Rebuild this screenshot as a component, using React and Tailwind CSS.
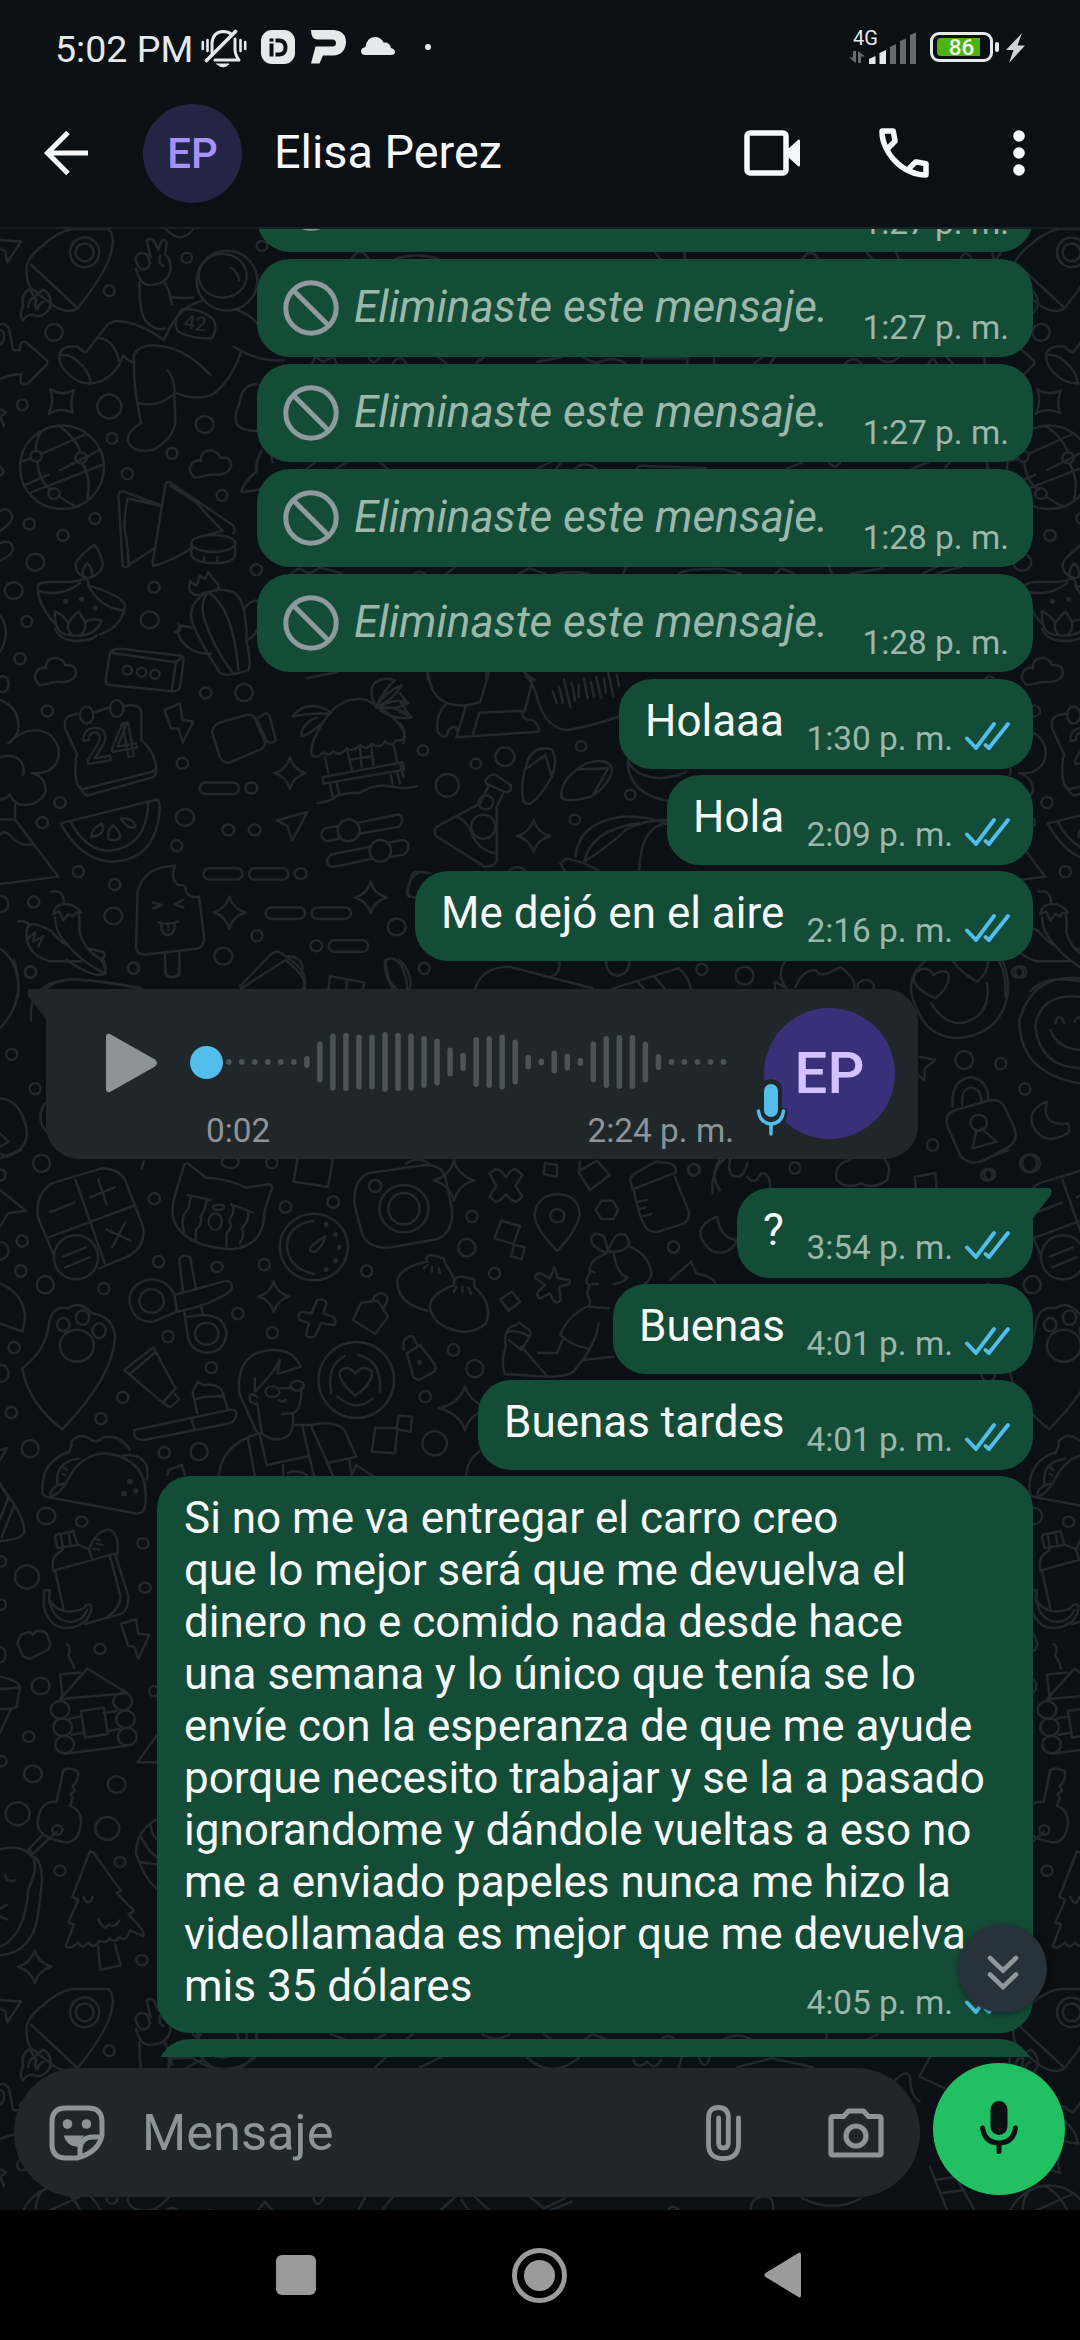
import React from "react";

const INK = "#22282c";

/* ---------- wallpaper ---------- */

function Dots({ list }) {
  return list.map(([x, y, rx, ry], i) => <ellipse key={i} cx={x} cy={y} rx={rx} ry={ry} />);
}

function Specks({ list, rx, ry }) {
  return list.map(([x, y], i) => (
    <ellipse key={i} cx={x} cy={y} rx={rx} ry={ry} fill={INK} stroke="none" />
  ));
}

function Sparks({ list }) {
  return list.map(([x, y, rx, ry], i) => (
    <path
      key={i}
      d={`M${x} ${y - ry}Q${x + rx * 0.22} ${y - ry * 0.22} ${x + rx} ${y}Q${x + rx * 0.22} ${y + ry * 0.22} ${x} ${y + ry}Q${x - rx * 0.22} ${y + ry * 0.22} ${x - rx} ${y}Q${x - rx * 0.22} ${y - ry * 0.22} ${x} ${y - ry}Z`}
    />
  ));
}

const upperPaths = [
  // star, rocket, arrow
  "M0 40L63 43L22 85L15 62L0 58",
  "M80 100Q75 80 130 50Q170 25 215 18L325 18Q345 30 335 60Q325 100 232 178Q200 190 160 172L90 135Q78 120 80 100ZM93 90L230 175",
  "M90 138Q60 150 70 172Q55 190 70 202Q80 190 95 190Q130 200 150 175Q158 150 130 140Q115 145 105 155Q95 150 90 138M85 175Q90 150 110 160Q100 175 112 180Q120 165 130 165",
  "M0 210Q20 205 28 222L40 262L60 262V252Q68 240 82 248L140 282Q145 287 138 292L85 328Q65 335 62 325V310Q30 310 0 320",
  "M150 340Q188 355 222 342Q208 365 218 388Q180 375 146 390Q165 362 150 340Z",
  "M497 18Q540 50 578 20",
  // astronaut
  "M415 92Q402 80 410 72Q425 62 440 70Q455 85 445 95Q425 105 415 92M408 98Q420 135 460 130Q510 125 512 95Q510 75 495 70L500 48Q495 35 485 42L475 60L462 42Q450 33 440 42L452 75M490 92Q475 90 480 72",
  "M418 125Q418 190 440 205Q470 225 495 218M515 170Q510 140 492 125M512 155Q560 158 580 156M608 162Q530 175 492 242Q420 205 350 203Q330 205 320 212L258 266Q240 262 235 255Q190 250 177 270Q175 295 215 315Q250 335 300 325Q350 310 370 272Q385 285 402 286",
  "M178 272Q210 265 250 295Q275 315 270 330M290 238Q340 235 358 285M692 96Q715 105 717 122",
  "M545 180Q600 175 640 200Q655 220 635 238Q580 240 535 225Q515 205 545 180Z",
  "M402 285Q395 260 440 253Q540 245 632 312M402 285Q400 340 424 408Q380 425 383 445Q400 470 460 462Q520 440 526 405L523 345Q525 320 503 302M415 368Q470 378 522 350M525 347Q590 365 640 350Q690 325 722 268M700 254Q770 285 850 282M708 180Q750 190 770 207",
  // clouds
  "M585 518Q560 505 575 490Q590 480 603 484Q600 465 630 463Q655 465 660 478Q690 475 694 492Q690 510 655 512Q625 510 612 515Z",
  "M120 935Q95 922 110 907Q125 897 138 901Q135 882 165 880Q190 882 195 895Q225 892 229 909Q225 927 190 929Q160 927 147 932Z",
  "M770 330Q725 330 718 370Q700 395 712 412Q730 425 770 424M785 465Q765 485 770 505Q735 525 722 546Q750 548 790 538M812 470L818 486",
  // globe
  "M78 532L145 512M180 503L297 463M64 485L92 480M125 470L258 430M92 548L308 492M125 425Q104 445 108 465M112 488Q120 530 155 542M178 556Q210 572 235 577M180 415Q230 440 243 468M248 490Q275 520 262 560M112 432Q150 410 180 415",
  // cards and ring
  "M480 573L367 545Q353 545 356 560L368 695Q378 702 390 692L463 660M383 560L480 574M383 560Q372 590 374 622Q385 660 386 695M497 530Q505 522 520 532L695 612Q710 620 700 630M575 660Q500 690 460 695Q455 690 460 680L497 530M510 534Q560 555 585 565Q610 585 668 625L600 637",
  "M574 650V675Q590 690 640 690Q700 690 705 675V650M612 678v8M652 678v8",
  // lamp
  "M113 740Q110 727 160 727Q230 730 248 722Q270 720 265 735Q300 740 350 757Q378 768 375 780Q360 820 300 833M113 740Q115 775 165 812M113 745Q180 760 240 730M265 735Q300 780 372 785M283 653Q228 680 226 695Q230 715 265 720Q310 710 308 690Q300 665 283 653ZM262 690Q245 700 248 715M262 690Q280 700 275 718",
  "M165 787Q160 835 215 835Q285 840 305 805Q270 800 255 808Q240 790 235 787Q215 800 205 810Q190 795 165 787ZM205 810Q200 825 215 833M255 808Q260 825 240 835M165 822Q180 845 230 846Q275 846 290 835",
  // cactus
  "M640 745Q570 760 573 800Q590 840 660 910Q680 920 745 905Q755 890 740 850Q740 760 700 748Q660 740 640 745ZM625 748Q600 765 612 800Q640 860 698 910M625 748Q700 780 715 905M572 725Q560 745 580 752Q600 758 615 748M572 728L590 735L600 715L615 722L625 708L640 722Q665 735 650 745M575 820Q540 810 533 825Q535 845 570 862Q600 873 633 872M525 828L540 825M535 812L542 820M732 782Q750 765 770 765M745 843Q765 835 770 825",
  // box
  "M330 870Q340 862 360 862L545 876Q553 880 550 890L540 940Q530 950 510 947L325 935Q315 930 318 920ZM333 870L528 889L548 878M528 889L515 946",
  // calendar
  "M240 992Q195 995 195 1010L195 1022L232 1075Q225 1080 226 1115Q228 1138 245 1145L450 1110Q465 1108 468 1100Q465 1070 424 1045V990Q420 970 370 978M280 990L328 980M240 1140Q250 1155 262 1157L460 1120Q470 1115 467 1100",
  "M493 985L540 972L547 1005L580 1008L548 1050L535 1022L513 1022Z",
  "M636 1030Q640 1015 660 1010L740 995Q765 993 770 1010L795 1050Q795 1060 780 1065L690 1090Q670 1093 660 1080ZM770 1003L795 992Q805 990 810 1000L827 1045Q820 1055 800 1048Z",
  // beach hut
  "M935 1075Q925 1050 990 990Q1040 955 1100 965Q1200 1000 1215 1035Q1210 1050 1190 1045Q1175 1062 1155 1048Q1140 1065 1115 1053Q1100 1068 1080 1055Q1060 1070 1040 1062Q1020 1080 1000 1068Q985 1080 970 1070Q950 1085 935 1075Z",
  "M995 990Q920 960 878 998Q940 990 990 993M950 1000Q900 1015 905 1038Q925 1035 970 1010M1128 980Q1100 940 1130 928Q1150 918 1185 925Q1150 945 1128 980Q1150 950 1205 935Q1180 965 1128 980Q1190 960 1225 970Q1200 985 1128 980Q1190 975 1235 1000Q1180 1005 1140 985",
  "M968 1120L1208 1090L1212 1105L970 1133ZM975 1080L985 1112M1182 1058L1192 1092M1042 1065L1055 1105M1115 1060L1120 1095M1080 1062L1085 1100M1050 1085L1115 1078M990 1135L998 1158M1010 1133L1018 1152M1172 1115L1178 1135M1192 1112L1200 1132M952 1172Q990 1170 1010 1158Q1050 1150 1080 1152Q1130 1130 1180 1140Q1220 1145 1250 1138",
  "M830 1207L922 1190L877 1247L862 1218Z",
  // sliders
  "M1014 1218L978 1222Q962 1228 965 1238Q970 1250 990 1248L1020 1243M1078 1234L1195 1220Q1212 1210 1205 1200Q1200 1193 1185 1196L1072 1212",
  "M1112 1260L995 1275Q978 1285 982 1292Q988 1302 1005 1300L1115 1284M1172 1280L1210 1276Q1228 1268 1225 1256Q1220 1246 1205 1247L1162 1252",
  // watermelon
  "M182 1213L472 1165Q482 1170 478 1195Q460 1290 330 1290Q240 1285 182 1213ZM212 1210Q260 1270 330 1268Q440 1260 445 1172M275 1240Q270 1225 305 1214Q320 1235 275 1240ZM325 1243Q322 1225 340 1217Q375 1240 350 1246Q330 1248 325 1243ZM362 1203Q395 1200 407 1218Q390 1230 362 1203Z",
  // popsicle
  "M408 1460L413 1350Q430 1300 525 1298Q510 1325 535 1337Q560 1335 558 1350Q570 1365 597 1360L613 1445Q610 1462 590 1465L430 1477Q408 1475 408 1460ZM495 1473V1510Q500 1522 518 1522Q538 1520 538 1508V1470M458 1372L486 1377L460 1384M550 1366L525 1376L550 1382M475 1412Q505 1418 535 1410M483 1415Q485 1438 505 1438Q525 1436 524 1414M505 1418v10",
  // tree on the left edge
  "M0 965Q60 980 55 1025Q45 1045 25 1052Q90 1010 150 1035Q190 1060 170 1090Q150 1115 95 1112Q140 1120 137 1150Q115 1180 60 1175Q40 1170 30 1155Q15 1165 0 1165M0 1080Q40 1070 65 1090Q75 1105 68 1115M45 1175V1205Q20 1205 0 1205M45 1205L175 1320L0 1335M0 1235Q15 1225 35 1240Q60 1260 100 1255",
  // peppers
  "M155 1350Q190 1345 192 1372M160 1395Q165 1375 195 1375Q225 1375 243 1392Q225 1390 220 1400L205 1395L190 1408L178 1390ZM165 1402Q165 1430 200 1455Q240 1490 315 1515Q320 1500 300 1485Q250 1465 238 1430Q240 1400 235 1392M55 1410Q80 1408 88 1418M80 1440Q75 1418 100 1415Q130 1420 155 1430Q180 1450 200 1458M80 1445Q90 1480 150 1490L245 1490M270 1465L312 1472Q318 1480 305 1485M82 1445L105 1432L100 1450L130 1440L115 1460",
  "M0 585Q25 575 38 595Q35 610 0 625M0 650Q35 640 40 662Q35 675 0 685M0 795Q18 810 18 830Q15 855 0 868M0 380L18 387L0 396L12 414M0 495L12 507L0 515",
  "M130 1550Q170 1525 220 1527Q330 1530 420 1546M720 1540L815 1475Q835 1465 855 1480Q910 1500 915 1530V1548M862 1480Q905 1480 908 1505M985 1548L990 1520L1093 1533L1088 1548M1040 1530v15M1180 1548Q1150 1510 1155 1490Q1180 1475 1205 1500Q1225 1530 1220 1548M0 1465Q60 1490 55 1560M1250 1310Q1235 1310 1232 1325L1222 1350Q1225 1362 1245 1362",
];

const upperDots = [
  [254, 65, 44, 30], [254, 65, 27, 18], [0, 235, 12, 14], [681, 122, 91, 60], [668, 112, 72, 44],
  [186, 497, 126, 84], [108, 475, 17, 11], [243, 478, 17, 11], [162, 550, 17, 11], [640, 650, 66, 17],
  [382, 905, 14, 9], [425, 909, 14, 9], [465, 913, 14, 9], [260, 995, 20, 17], [350, 982, 20, 17],
  [1046, 1227, 33, 22], [1141, 1268, 32, 22],
  [328, 142, 16, 11], [162, 226, 26, 17], [67, 372, 16, 11], [328, 375, 36, 24], [336, 439, 16, 11],
  [614, 411, 27, 17], [516, 469, 16, 11], [560, 76, 16, 10], [382, 510, 17, 11], [666, 554, 16, 11],
  [88, 611, 17, 11], [285, 600, 17, 11], [189, 634, 17, 11], [106, 688, 27, 17], [462, 738, 17, 11],
  [41, 745, 27, 17], [80, 807, 16, 11], [449, 804, 27, 17], [60, 882, 17, 11], [617, 951, 17, 11],
  [732, 950, 27, 17], [142, 987, 17, 11], [547, 1092, 17, 11], [754, 1142, 18, 11], [555, 1201, 27, 17],
  [180, 1171, 17, 11], [127, 1211, 17, 11], [685, 1226, 18, 11], [764, 1226, 18, 11], [530, 1258, 17, 11],
  [235, 1310, 17, 11], [344, 1336, 17, 11], [902, 1314, 18, 11], [101, 1371, 17, 11], [340, 1399, 27, 17],
  [771, 1439, 17, 11], [670, 1480, 27, 17], [400, 1504, 17, 11], [92, 1512, 17, 11], [949, 1459, 18, 11],
  [1190, 1421, 27, 17], [769, 703, 17, 11], [786, 52, 16, 10], [0, 1375, 25, 17], [8, 933, 18, 16],
];

const pills = [[599, 1131], [610, 1303], [747, 1303], [797, 1382], [935, 1382], [986, 1448]];

const middlePaths = [
  // calculator
  "M80 200Q75 130 110 100L215 55Q250 55 265 90L303 230Q310 290 270 320L210 355M80 200L115 320M160 90L222 340M103 262L282 168M107 186L158 158M133 320L182 292M138 352L190 322M190 142L243 112M208 88L226 163M225 238L276 272M265 218L238 292",
  // cat
  "M370 140L390 45Q395 35 405 48L437 83Q480 85 522 113L570 102Q578 105 576 115L560 185Q560 290 490 298Q390 290 368 210Q362 170 370 140ZM397 135L447 150M490 163L536 188M405 140Q400 160 400 175Q380 200 390 245M438 150Q435 180 425 200Q430 220 415 240V275M492 165Q500 185 485 210Q495 230 480 250V288M525 183Q530 210 512 235Q520 250 508 280",
  "M630 30L622 95L695 110L705 30",
  // camera
  "M752 170Q745 95 780 70L900 45Q940 45 945 90L958 180Q960 250 925 268L830 292Q775 300 765 240ZM860 42Q885 15 910 42",
  "M1037 70L1050 58Q1060 55 1072 82Q1085 50 1095 60L1107 75L1092 107L1107 140L1095 155Q1085 155 1072 132Q1060 155 1050 155L1037 140L1052 107Z",
  "M1155 40L1180 45V80L1152 72ZM1225 65L1265 32L1292 75L1250 120ZM1228 35V60",
  "M1181 303Q1130 230 1133 190Q1140 135 1181 132Q1225 135 1228 190Q1228 230 1181 303ZM1275 152H1298L1310 178L1300 207H1275L1262 180ZM1062 212L1102 228L1088 282L1048 265ZM1090 285L1112 292L1105 328L1082 318Z",
  "M1335 85L1340 118L1432 68Q1435 50 1420 40L1390 35L1345 70ZM1343 118Q1350 180 1365 225Q1375 250 1395 245L1450 220Q1465 200 1458 180L1430 80M1352 155L1370 150M1354 178L1368 172M1360 200L1380 192",
  "M665 212Q608 225 608 290Q612 355 665 372M690 258L660 288Q652 308 668 305Q684 290 690 258",
  // scissors
  "M380 330Q385 310 403 322L415 415M380 330L388 428M370 435Q350 380 310 390Q270 410 275 460Q285 520 325 515L375 485Q450 465 490 420Q495 395 480 392L370 435L375 485M425 465L430 495Q475 495 480 550Q475 610 435 608Q400 600 397 550L390 480M398 500L430 495",
  "M672 450Q690 445 692 460L685 490L705 500Q715 510 708 525L680 520L668 558Q655 568 648 555L655 520L635 510Q628 495 638 485L660 490Z",
  "M748 510L765 458L800 452L822 500L795 552ZM790 450Q795 430 808 430Q825 435 820 455L812 475",
  // dumplings
  "M905 482Q840 460 842 390Q850 350 905 335Q900 315 915 315L940 325L945 345Q955 365 962 388M962 395Q965 378 980 380L1005 388V410Q1045 460 1030 520Q990 570 930 520Q880 450 962 405ZM898 355l8 -10M915 365v-15M932 370l-2 -15M962 425l5 -15M980 425v-15M998 432l-5 -18",
  "M1175 352L1182 385L1205 390Q1212 400 1200 405L1185 410L1188 450Q1180 465 1172 450L1165 430L1145 445Q1135 440 1140 425L1155 405L1135 385Q1132 372 1145 370L1165 385ZM1060 448L1085 425L1102 455L1078 482Z",
  // woman
  "M1285 308Q1250 290 1253 265Q1260 240 1280 260L1288 300L1305 258Q1325 240 1333 275Q1330 310 1288 305M1335 290Q1380 320 1380 375Q1375 395 1365 402M1285 310Q1245 330 1250 370Q1235 400 1250 405Q1240 430 1250 450V470L1290 475M1300 310Q1310 380 1330 382Q1320 400 1300 402M1252 362l8 5M1255 402h12M1250 465Q1200 500 1187 555Q1215 590 1245 595M1268 520Q1265 580 1215 665Q1200 680 1160 680L1070 672Q1060 640 1072 590Q1068 560 1075 545Q1075 530 1095 525Q1100 510 1110 530Q1130 540 1122 560L1105 600M1140 608L1180 610L1192 570M1235 630L1300 620M1076 545Q1100 540 1122 560M1105 590L1160 680M1078 570L1105 600",
  "M1420 390L1465 335L1475 370Q1510 380 1515 398M1510 130Q1505 60 1540 20M1520 200Q1480 220 1485 260Q1500 310 1530 308Q1555 300 1562 270Q1525 265 1520 200",
  // paw
  "M132 838Q60 760 47 655Q100 600 105 510Q115 465 145 475Q170 450 195 490Q240 500 244 560Q240 680 132 838Z",
  "M263 660L325 592L372 715L345 758ZM275 672L328 608M345 758L360 772L380 748L370 732",
  "M285 840L485 780Q505 775 500 800Q495 820 480 822L305 870Q280 870 285 840ZM418 790L408 725L420 695L430 705Q460 700 470 720L482 775M415 748L435 740L475 738M405 805L412 835",
  // man
  "M545 850L507 730Q500 620 560 602Q620 590 637 650L605 665L588 672Q590 650 593 630Q580 670 540 725L540 685M545 740Q525 720 530 755L545 765M545 760L555 850Q580 880 605 862Q625 850 620 790Q640 780 638 715M590 750Q600 760 605 750M595 715L615 715M597 793Q610 790 620 790M550 850Q470 880 463 980M525 865L540 975M550 852L565 945L655 918M625 825L660 825M640 825L655 918L665 975M660 825Q710 810 730 840L755 920L692 940M660 830L705 975M740 930L745 975L755 945L790 978M600 975V945M610 970Q625 955 650 975",
  "M730 618Q690 650 702 730M758 615Q810 630 805 725M715 740Q755 790 790 745M753 737Q715 690 720 665Q735 640 753 670Q770 640 788 665Q790 700 753 737Z",
  "M862 610L890 585L920 640Q925 655 920 665L888 690Q875 685 875 675ZM855 600V575Q865 555 875 560L885 588",
  "M795 833L842 835L837 910L788 905ZM845 797L873 800L870 845L840 838Z",
  "M0 400Q50 430 53 500L48 545L0 520M0 120L55 182L17 190L0 230M0 900L15 895L0 930M0 1000L20 1050M0 25L45 0M355 975L357 960L385 945L392 975M988 975Q990 930 1015 905M300 55l5 -20",
];

const middleDots = [
  [161, 322, 47, 66], [456, 215, 14, 25], [463, 172, 12, 8], [856, 176, 52, 71], [856, 176, 33, 47],
  [795, 108, 13, 18], [1181, 197, 15, 20], [665, 291, 72, 100], [321, 453, 26, 35], [438, 551, 25, 33],
  [163, 587, 36, 48], [134, 524, 13, 20], [175, 503, 14, 22], [210, 542, 14, 22], [577, 725, 15, 16],
  [630, 707, 14, 15], [755, 690, 80, 114],
  [88, 40, 18, 26], [0, 75, 12, 17], [327, 146, 12, 17], [47, 273, 12, 17], [44, 363, 12, 17],
  [96, 404, 18, 26], [220, 416, 12, 17], [336, 335, 12, 17], [460, 351, 12, 15], [560, 344, 12, 17],
  [605, 171, 12, 17], [706, 156, 12, 17], [777, 363, 12, 17], [1000, 199, 12, 17], [989, 293, 18, 26],
  [1471, 58, 12, 17], [1427, 291, 12, 17], [1048, 370, 12, 17], [504, 491, 12, 17], [356, 560, 12, 17],
  [577, 548, 12, 17], [448, 653, 12, 17], [30, 593, 12, 17], [260, 742, 12, 17], [24, 788, 12, 17],
  [214, 806, 12, 17], [64, 896, 18, 26], [348, 908, 12, 17], [422, 905, 18, 26], [961, 600, 12, 17],
  [1006, 656, 18, 26], [901, 740, 12, 17], [921, 880, 26, 36], [3, 670, 15, 25], [0, 302, 18, 26],
  [488, 36, 18, 18], [576, 38, 12, 17],
];

const lowerPaths = [
  // taco
  "M150 120Q125 120 127 100Q125 30 205 5M150 120L405 160Q435 165 437 130Q445 20 315 8Q240 10 200 80Q180 110 150 120Q150 90 195 85M365 15Q420 5 440 40Q445 65 440 75M172 85Q165 30 235 22M192 45l8 6M188 60l8 4",
  "M205 8Q215 -5 215 -22Q240 -45 270 -28Q290 -15 310 -32Q360 -40 390 0",
  "M0 90Q70 160 73 205Q70 225 0 230M25 120L0 175M40 145L5 220",
  // backpack
  "M165 222Q165 212 185 212L220 205L233 240L172 248ZM182 212L188 245M205 208L212 240M160 305Q150 270 185 255L190 247M235 240L265 250Q275 265 275 278M160 305L345 262L385 370Q385 410 360 415L255 440M330 270L362 370Q360 400 325 420M165 305L190 400M268 250Q290 200 330 202Q360 215 352 265M285 225L300 228M280 250L298 252M290 237L308 240",
  "M132 355H150L147 375Q165 410 215 408Q250 405 255 395Q265 385 275 395Q275 410 260 430Q210 465 160 440Q125 410 132 375ZM147 378Q160 435 215 435Q250 430 262 405",
  "M55 480L65 465L90 460L98 467L110 458Q130 455 140 465L152 492L145 505L90 528L70 522L52 490Z",
  "M363 440L408 428L415 465L448 468L415 528L402 497L385 495Z",
  "M200 490Q215 500 205 520Q220 540 222 552",
  // cabin
  "M180 630L262 553L382 615ZM180 568L240 563M180 568L187 620M207 680L245 673M215 720L250 715M310 665L350 660M322 712L358 705M195 768L380 748M243 660L312 652L323 718L255 727Z",
  "M470 722L412 790H470M0 573Q60 585 60 600L50 650Q40 655 0 655M0 603Q30 605 55 600M32 657L0 715",
  // key
  "M170 890L190 810Q205 800 233 812Q238 825 228 840L218 850L225 862L212 870L218 880L210 900Q245 910 243 945Q235 995 195 992Q110 980 113 940Q120 885 170 890M170 965L98 1022L80 1015L125 975M85 1010L98 1022",
  // sleeping mask
  "M0 1010Q60 995 100 1030Q115 1060 85 1110Q80 1180 50 1220Q25 1250 0 1255M105 1030Q130 1050 125 1100L115 1170Q100 1270 0 1278M15 1075Q20 1095 45 1088M0 1160L22 1150M0 1180L22 1187",
  "M470 935Q410 960 408 1020Q430 1080 470 1110M418 1042L470 1048M425 980Q440 1010 470 1030M452 950Q455 970 470 985",
  // fir tree
  "M270 1015L217 1130L235 1138L205 1195L222 1200L197 1255Q210 1265 235 1245Q245 1265 265 1245Q280 1265 300 1240Q315 1250 330 1235Q345 1250 360 1230Q375 1250 390 1215L430 1230Q440 1220 385 1175L402 1165L350 1120L363 1115L280 1018ZM250 1130Q265 1160 278 1130M295 1187Q315 1220 325 1200Q345 1210 358 1190M295 1255L300 1315L362 1303L345 1250",
];

const lowerDots = [
  [139, 167, 27, 21], [245, 181, 17, 13], [429, 236, 17, 13], [81, 321, 36, 29], [435, 348, 17, 13],
  [300, 503, 17, 13], [122, 597, 27, 21], [86, 725, 17, 13], [99, 819, 27, 21], [350, 846, 27, 21],
  [53, 920, 36, 29], [322, 957, 36, 29], [360, 1042, 17, 13], [180, 1064, 17, 13], [426, 1290, 17, 13],
  [4, 282, 14, 13], [4, 391, 14, 13], [4, 787, 16, 13], [0, 518, 17, 20], [462, 610, 14, 13],
  [180, 657, 28, 22], [188, 701, 28, 22], [194, 745, 28, 22], [368, 636, 28, 22], [377, 681, 28, 22],
  [382, 725, 28, 22], [172, 961, 15, 12],
];

const beachPaths = [
  "M65 38Q70 110 110 130Q150 145 185 125L205 38M305 65L288 38M305 65L288 152L183 158M152 138L130 232L320 215Q320 190 305 180Q280 180 282 160L288 152M183 158L168 225M108 130Q80 165 87 215Q100 240 108 225Q112 200 128 200L133 215M290 48Q310 70 320 130Q340 205 385 210Q440 200 508 168",
  "M352 95L362 130M366 80L376 128M378 58L393 142M396 70L404 122M412 75v35M424 55L433 115M440 65L447 110M452 50L464 115M470 55L475 98M480 38L492 108M500 45L505 78",
  "M0 100L18 130L0 125L25 170L0 155M0 190Q15 215 8 250M0 310L8 350",
  "M285 425Q275 370 295 300Q310 255 350 268Q365 300 350 350Q325 410 300 432Q288 432 285 425ZM293 325L335 285L350 350M372 400Q375 350 430 310Q480 290 490 330Q480 380 440 410Q385 430 372 412ZM415 328L480 325L448 398",
  "M205 350Q215 338 225 348L255 375Q260 395 245 397L200 372Q193 362 205 350ZM205 375L185 430L85 500Q75 515 85 530L195 620Q220 620 223 600V440L240 395M130 468Q160 490 165 520Q180 570 220 580",
  "M370 610L385 595L425 610L455 630M370 610L380 632M405 590Q410 490 510 470Q560 465 615 490M425 605Q440 510 550 490M425 605Q490 550 520 510Q560 480 615 480M552 630Q555 500 615 490M525 300Q540 350 600 355Q640 350 660 335M525 310Q530 400 615 422",
  "M20 710Q10 690 30 650L45 635L70 640",
];

const beachDots = [
  [53, 271, 12, 15], [242, 290, 22, 28], [175, 311, 12, 15], [109, 376, 27, 34], [418, 259, 12, 15],
  [531, 404, 12, 15], [403, 479, 12, 15], [198, 427, 17, 21], [192, 500, 28, 36], [270, 634, 18, 12],
];

const voiceRowPaths = [
  "M97 0Q140 60 152 40Q155 20 150 0M240 0V40Q245 60 260 45V0M0 205Q40 120 20 0M45 180Q40 60 110 58Q170 70 205 85M350 85L415 0M415 0Q450 60 440 85M560 0Q560 60 575 85M580 0Q600 40 595 85M690 85Q700 20 740 20L860 85M812 0Q815 40 800 50M880 0Q880 45 897 47Q915 40 914 0M890 85L985 25Q1000 50 1003 85M925 65L935 85M950 50L965 85M1125 85V65L1142 85Q1125 40 1142 0M1155 80Q1165 30 1185 30Q1190 60 1220 20Q1245 60 1240 85",
  "M1345 0Q1310 60 1330 140Q1345 230 1390 235Q1460 220 1464 80Q1462 30 1455 0M1358 115Q1320 80 1328 40Q1345 10 1355 45Q1375 20 1378 50Q1375 90 1358 115ZM1418 65Q1390 30 1383 0M1418 65Q1435 40 1435 0M1352 130Q1370 190 1395 190Q1440 170 1433 70",
  "M1568 55Q1500 40 1480 180Q1480 340 1568 370M1568 110Q1510 100 1503 200Q1510 320 1568 325M1525 210Q1535 265 1568 270M1532 190Q1538 150 1545 190M1560 185Q1565 165 1568 175M1335 290L1358 300L1343 325L1342 362L1333 345",
  "M1383 440Q1380 360 1410 352Q1435 360 1435 420M1397 435Q1395 385 1410 383Q1425 385 1425 430M1388 450Q1370 460 1376 500L1395 590Q1410 620 1430 600L1465 560Q1480 540 1472 500L1458 440Q1450 410 1430 425ZM1418 510L1412 565L1447 545L1425 505",
  "M1520 425Q1490 450 1500 500Q1515 560 1550 520Q1555 505 1550 490Q1520 500 1518 450Z",
  "M0 415Q25 420 35 480Q50 560 10 590L0 580M0 520L12 545L0 560M65 430Q50 480 70 520",
  "M1045 690Q1030 640 1045 600M1060 600Q1055 650 1070 650Q1080 650 1085 610M1085 650Q1095 680 1105 640Q1120 640 1118 690M1235 600Q1210 610 1215 660Q1230 690 1250 670Q1270 690 1288 660Q1295 620 1285 600M1330 690L1328 650L1358 640L1360 690",
];

const voiceRowDots = [
  [194, 24, 8, 17], [44, 36, 8, 17], [616, 25, 8, 17], [1019, 28, 8, 17], [1081, 47, 13, 27],
  [1257, 80, 12, 20], [1482, 36, 8, 17], [1400, 300, 13, 27], [1453, 311, 8, 17], [1421, 488, 12, 24],
  [1488, 387, 8, 17], [1497, 610, 13, 27], [1354, 555, 8, 17], [1437, 643, 8, 17], [17, 283, 8, 17],
  [51, 386, 8, 17], [1007, 630, 8, 17], [1154, 624, 8, 17],
];

const gapPaths = [
  "M208 117Q225 75 240 117M290 117Q330 95 370 117M775 98L785 117M830 98V117M1050 117Q1065 80 1080 117M1170 98l10 19M1225 98l5 19M1345 117q10 -35 20 0",
  "M135 430L140 410L155 425L175 410L180 430M240 412Q250 440 260 412M285 430Q300 400 310 430M370 412L385 430M440 430L455 412M555 425L600 412M640 412L665 430Q695 405 720 430M750 430V415H835V430M885 412v18M960 430L975 412M990 430L998 412M1130 430Q1145 405 1160 430M1190 412Q1210 440 1230 412M1285 430q8 -25 15 0M1320 412l10 18M1390 412v18",
  "M140 726L125 746M180 746L200 726M260 726l15 20M555 746L580 726M590 746L600 726M625 746q20 -25 40 0M740 746Q745 735 760 738L870 745M1020 746L1050 728M1100 728q10 22 20 0M1255 746L1285 726M1325 726l-10 20M1395 728v18",
  "M95 1061L110 1045L130 1061L150 1042L190 1061M325 1061q10 -10 20 0M385 1061L400 1043M520 1061L540 1045L570 1061M590 1061q30 -8 60 0M715 1061L720 1043M820 1061Q830 1045 900 1047L935 1061M1000 1061L1010 1045L1035 1061M1100 1043l5 18M1140 1061L1200 1045M1275 1061L1300 1041M1300 1061L1345 1041",
  "M125 1375L180 1357M350 1357v20M460 1357v20M530 1357L550 1380",
];

const footerPaths = [
  "M280 535Q325 600 370 535M245 562V535H265M545 562L560 532M610 562L640 532M765 532Q800 600 840 535M920 540q5 30 20 5q10 30 20 -5M985 562L990 532M1015 535q8 40 15 0M1070 562L1120 535L1180 562M1350 532L1335 590L1372 625M1300 600Q1320 560 1322 600Q1320 640 1335 665",
  "M375 990L385 965L395 990M455 952q5 40 15 0M520 990L530 952M555 990L570 952M640 990L660 952M670 960L680 990M690 952L710 990M770 952L790 985L820 955M800 990L830 965M970 990q5 -20 15 0M1090 990q0 -40 20 -40q15 0 12 40M1165 955Q1210 1000 1250 955M1350 860L1375 990M1385 880L1415 990M1358 900L1388 890M1366 940L1400 930",
  "M280 462Q285 480 292 462M345 462V478M372 462V478M480 462L500 478M545 478L560 462M590 478L600 462M700 462Q720 490 740 462M790 462L800 478M850 478L860 462L880 478M960 478q10 -20 20 0M1050 478Q1070 455 1090 478M1200 462v16M1260 478L1275 462",
];

function Wallpaper() {
  return (
    <svg
      className="absolute inset-0 h-full w-full"
      viewBox="0 0 1080 2340"
      fill="none"
      stroke={INK}
      strokeWidth="2.5"
      strokeLinecap="round"
      strokeLinejoin="round"
      aria-hidden="true"
    >
      <defs>
        <g id="wp-upper">
          <g transform="translate(0 220) scale(.33333 .49745)" className="[&_*]:[vector-effect:non-scaling-stroke]">
            {upperPaths.map((d, i) => <path key={i} d={d} />)}
            <Dots list={upperDots} />
            <Sparks list={[[870, 1112, 47, 32], [688, 1392, 48, 32], [1112, 1362, 48, 32]]} />
            {pills.map(([x, y], i) => <rect key={i} x={x} y={y} width="118" height="23" rx="17" ry="11.5" />)}
            <Specks list={[[197, 767], [245, 763], [285, 780]]} rx={8} ry={5} />
          </g>
          <text x="195" y="330" textAnchor="middle" fontSize="20" fontFamily="Roboto" fontWeight="500" stroke="none" fill={INK} transform="rotate(8 195 324)">42</text>
          <text x="110" y="760" textAnchor="middle" fontSize="48" fontFamily="Roboto" fontWeight="500" strokeWidth="2.200" transform="rotate(-10 110 745)">24</text>
        </g>
        <g id="wp-middle">
          <g transform="translate(0 1150) scale(.47193 .33333)" className="[&_*]:[vector-effect:non-scaling-stroke]">
            {middlePaths.map((d, i) => <path key={i} d={d} />)}
            <Dots list={middleDots} />
            <Sparks list={[[962, 91, 43, 60], [580, 440, 33, 46], [985, 775, 55, 65]]} />
            <Specks list={[[691, 223], [711, 253], [719, 292], [711, 332], [691, 358], [889, 637]]} rx={5} ry={8} />
          </g>
        </g>
        <g id="wp-lower">
          <g transform="translate(0 1450) scale(.33333 .39541)" className="[&_*]:[vector-effect:non-scaling-stroke]">
            {lowerPaths.map((d, i) => <path key={i} d={d} />)}
            <Dots list={lowerDots} />
            <Sparks list={[[104, 1307, 50, 42]]} />
            <Specks list={[[390, 80], [407, 104], [372, 110]]} rx={9} ry={7} />
          </g>
        </g>
      </defs>
      <use href="#wp-upper" />
      <use href="#wp-upper" x="987" />
      <use href="#wp-upper" y="1760" />
      <use href="#wp-upper" x="987" y="1760" />
      <use href="#wp-middle" />
      <use href="#wp-middle" x="987" />
      <use href="#wp-lower" />
      <use href="#wp-lower" x="987" />
      <g transform="translate(400 660) scale(.43365 .33333)" className="[&_*]:[vector-effect:non-scaling-stroke]">
        {beachPaths.map((d, i) => <path key={i} d={d} />)}
        <Dots list={beachDots} />
        <Sparks list={[[308, 528, 38, 48]]} />
      </g>
      <g transform="translate(0 960) scale(.68875 .33333)" className="[&_*]:[vector-effect:non-scaling-stroke]">
        {voiceRowPaths.map((d, i) => <path key={i} d={d} />)}
        <Dots list={voiceRowDots} />
      </g>
      <g transform="translate(240 220) scale(.53571 .33333)" className="[&_*]:[vector-effect:non-scaling-stroke]">
        {gapPaths.map((d, i) => <path key={i} d={d} />)}
      </g>
      <g transform="translate(0 1880) scale(.68875 .33333)" className="[&_*]:[vector-effect:non-scaling-stroke]">
        {footerPaths.map((d, i) => <path key={i} d={d} />)}
      </g>
    </svg>
  );
}

/* ---------- status bar ---------- */

function StatusBar() {
  return (
    <div className="flex h-[95px] items-start pl-[55px] pt-[26px]">
      <div className="w-[146px] whitespace-nowrap text-[37.6px] leading-[46px] text-[#e6e9e9]">5:02 PM</div>
      <svg className="mt-[3px] h-[40px] w-[46px] shrink-0" viewBox="0 0 46 40" fill="none" stroke="#e6e9e9" strokeWidth="3" strokeLinecap="round" strokeLinejoin="round">
        <path d="M1.8 13v7M6.5 11v11M39.500 11v11M44.200 13v7" strokeWidth="2.600" />
        <path d="M11 24V14Q12 3 22 2.500Q27 2.500 30 5" />
        <path d="M34 10V20Q34 26 38 31H14" />
        <path d="M34.500 2.500L5.500 31.500" strokeWidth="3.600" />
        <path d="M16 35H28Q22 41 16 35Z" fill="#e6e9e9" strokeWidth="1" />
      </svg>
      <svg className="ml-[14px] mt-[4px] h-[34px] w-[34px] shrink-0" viewBox="0 0 34 34">
        <rect width="34" height="34" rx="11" fill="#e6e9e9" />
        <path d="M8.500 13.500h4v13h-4zM8.500 8.500h4v3h-4zM14.500 8.500h4q8 .5 8 9t-8 9h-4v-4h4q4-.5 4-5t-4-5h-4z" fill="#0b1014" />
      </svg>
      <svg className="ml-[16px] mt-[4px] h-[34px] w-[35px] shrink-0" viewBox="0 0 35 34" fill="#e6e9e9">
        <path d="M0 0H23Q35 1 35 12.500Q34 25 22 25.500H12L8.500 33.500H0L4.500 16.500H22Q25 16 25 13T22 9.500H6Q0 9 0 0Z" />
      </svg>
      <svg className="ml-[15px] mt-[11px] h-[18px] w-[34px] shrink-0" viewBox="0 0 34 18" fill="#e6e9e9">
        <path d="M4.500 18Q0 18 0 14Q0 11 4.500 10Q6 0 14 0Q20 0 22.500 5.500Q29 5 30 11Q34 12 34 15Q34 18 30 18Z" />
      </svg>
      <div className="ml-[30px] mt-[18px] h-[6px] w-[6px] shrink-0 rounded-full bg-[#e6e9e9]" />
      <div className="ml-[418px] mt-[2px] flex h-[38px] shrink-0">
        <div className="w-[19px]">
          <div className="pl-[4px] text-[20px] leading-[20px] text-[#e6e9e9]">4G</div>
          <svg className="mt-[3px] h-[12px] w-[16px]" viewBox="0 0 16 12" fill="#686b6d">
            <path d="M4 0h3v12L0 6.500h4zM9 0l7 5.500h-4V12H9z" />
          </svg>
        </div>
        <svg className="mt-[4px] h-[32px] w-[49px]" viewBox="0 0 49 32">
          <path d="M1 32V27L7.500 24V32ZM11.500 32V21L18 18V32Z" fill="#e6e9e9" />
          <path d="M22 32V15L28 12V32ZM32 32V9L38 6.500V32ZM42 32V3L48 .5V32Z" fill="#686b6d" />
        </svg>
      </div>
      <div className="ml-[13px] mt-[6px] flex h-[30px] w-[63px] shrink-0 items-center rounded-[9px] border-[3px] border-[#e6e9e9] px-[4px]">
        <div className="flex h-[18px] w-[43px] items-center justify-center rounded-l-[4px] bg-[#4db315] pl-[6px] text-[22.5px] font-medium leading-[18px] text-[#eef8e8]">86</div>
      </div>
      <div className="ml-[2px] mt-[16px] h-[10px] w-[4px] shrink-0 rounded-[2px] bg-[#e6e9e9]" />
      <svg className="ml-[7px] mt-[7px] h-[30px] w-[19px] shrink-0" viewBox="0 0 19 30" fill="#cfd2d3">
        <path d="M16 0L0 17H7.500L3 30L19 12.500H11.500Z" />
      </svg>
    </div>
  );
}

/* ---------- header ---------- */

function Header() {
  return (
    <div className="flex h-[134px] items-center border-b-2 border-[#1a2023] pb-[16px] pl-[44px] text-[#f7f8fa]">
      <svg className="h-[46px] w-[46px]" viewBox="0 0 46 46" fill="none" stroke="#f7f8fa" strokeWidth="5">
        <path d="M44 23H4M24 2.500L3.500 23L24 43.500" />
      </svg>
      <div className="ml-[53px] flex h-[99px] w-[99px] items-center justify-center rounded-full bg-[#242445] text-[42px] font-medium text-[#a791ff]">EP</div>
      <div className="ml-[32px] mt-[-3px] w-[470px] whitespace-nowrap text-[46.8px] leading-[54px]">Elisa Perez</div>
      <svg className="h-[46px] w-[57px]" viewBox="0 0 57 46">
        <rect x="3" y="3" width="39" height="40" rx="3" fill="none" stroke="#f7f8fa" strokeWidth="5.500" />
        <path d="M44 19L54.500 9.500Q56 9 56 11V35Q56 37 54.500 36.500L44 27Z" fill="#f7f8fa" />
      </svg>
      <svg className="ml-[70px] h-[66px] w-[66px]" viewBox="0 0 24 24" fill="#f7f8fa">
        <path d="M19.950 21q-3.125 0-6.175-1.363-3.050-1.362-5.550-3.862-2.500-2.500-3.863-5.550Q3 7.175 3 4.050q0-.45.300-.75t.750-.300H8.100q.350 0 .625.238.275.237.325.562l.650 3.500q.050.400-.025.675-.075.275-.275.475L6.975 10.900q.500.925 1.188 1.787.687.863 1.512 1.663.775.775 1.625 1.438.850.662 1.800 1.212l2.350-2.350q.225-.225.587-.338.363-.112.713-.062l3.450.700q.350.100.575.363.225.262.225.587v4.050q0 .450-.300.750t-.750.300ZM6.025 9l1.650-1.650L7.250 5H5.025q.125 1.025.350 2.025.225 1 .650 1.975Zm8.950 8.950q.975.425 1.988.675 1.012.250 2.037.325v-2.200l-2.350-.475Z" />
      </svg>
      <svg className="ml-[76px] h-[46px] w-[12px]" viewBox="0 0 12 46" fill="#f7f8fa">
        <circle cx="6" cy="6" r="5.800" /><circle cx="6" cy="23" r="5.800" /><circle cx="6" cy="40" r="5.800" />
      </svg>
    </div>
  );
}

/* ---------- messages ---------- */

function Time({ children }) {
  return <span className="whitespace-nowrap text-[33.4px] leading-[40px] text-[#9cb7ab]">{children}</span>;
}

function Ticks() {
  return (
    <svg className="mb-[9px] ml-[12px] h-[28px] w-[45px]" viewBox="0 0 45 28" fill="none" stroke="#53bdeb" strokeWidth="3.800" strokeLinecap="round" strokeLinejoin="round">
      <path d="M2 16.500L11 26L29 2M20.500 23L24 26L43 2" strokeLinejoin="miter" />
    </svg>
  );
}

function Deleted({ time, className = "" }) {
  return (
    <div className={"flex h-[98px] w-[776px] shrink-0 items-start self-end rounded-[33px] bg-[#144d37] pl-[25px] pr-[24px] " + className}>
      <svg className="mt-[20px] h-[58px] w-[58px]" viewBox="0 0 58 58" fill="none" stroke="#8f9a9c" strokeWidth="5">
        <circle cx="29" cy="29" r="25.200" /><path d="M11.500 11.500L46.500 46.500" />
      </svg>
      <span className="ml-[14px] mt-[22px] whitespace-nowrap text-[44px] italic leading-[52px] text-[#9cb7ab]">Eliminaste este mensaje.</span>
      <span className="ml-auto mt-[49px] leading-none"><Time>{time}</Time></span>
    </div>
  );
}

function Bubble({ text, time, width }) {
  return (
    <div className={"flex h-[90px] shrink-0 items-end justify-between self-end rounded-[33px] bg-[#144d37] pl-[26px] pr-[23px] " + width}>
      <span className="mb-[22px] whitespace-nowrap text-[44px] leading-[52px] text-[#f7f8fa]">{text}</span>
      <span className="mb-[10px] flex items-end"><Time>{time}</Time><Ticks /></span>
    </div>
  );
}

const wave = [6, 6, 6, 6, 6, 6, 12, 41, 57, 58, 55, 55, 60, 58, 57, 52, 47, 29, 18, 50, 52, 55, 45, 15, 7, 23, 17, 8, 41, 52, 54, 54, 41, 16, 6, 6, 6, 6, 6];

function VoiceNote() {
  return (
    <div className="relative ml-[46px] mt-[28px] flex h-[170px] w-[872px] shrink-0 rounded-[33px] rounded-tl-none bg-[#1f272a]">
      <svg className="absolute -left-[19px] top-0 h-[34px] w-[24px]" viewBox="0 0 24 34" fill="#1f272a">
        <path d="M4 0H24V34H19V30L1 7Q-1 0 4 0Z" />
      </svg>
      <svg className="ml-[60px] mt-[44px] h-[60px] w-[52px] shrink-0" viewBox="0 0 52 60" fill="#8c9498">
        <path d="M0 3Q1 0 4 1L49 26.500Q53 30 49 33.500L4 59Q1 60 0 57Z" />
      </svg>
      <div className="ml-[32px] w-[544px] shrink-0">
        <div className="mt-[43px] flex h-[60px] items-center">
          <div className="h-[33px] w-[33px] shrink-0 rounded-full bg-[#53bdeb]" />
          <svg className="ml-[3px] h-[60px] w-[502px] shrink-0" viewBox="0 0 502 60" fill="#4b5356">
            {wave.map((h, i) => <rect key={i} x={i * 13.020} y={30 - h / 2} width="5.500" height={h} rx="2.750" />)}
          </svg>
        </div>
        <div className="mt-[19px] flex justify-between pl-[16px] text-[33.4px] leading-[40px] text-[#8c9498]">
          <span>0:02</span><span>2:24 p. m.</span>
        </div>
      </div>
      <div className="relative ml-[30px] mt-[19px] flex h-[131px] w-[131px] shrink-0 items-center justify-center rounded-full bg-[#3a3079] text-[58px] font-medium text-[#d2c2ff]">
        EP
        <svg className="absolute -left-[12px] top-[69px] h-[62px] w-[38px]" viewBox="0 0 38 62" fill="none">
          <path d="M19 13V40M7 35Q8 47 19 48Q30 47 31 35M19 48V57" stroke="#1f272a" strokeWidth="9" strokeLinecap="round" />
          <rect x="8" y="2" width="22" height="44" rx="11" fill="#1f272a" />
          <rect x="12" y="7" width="14" height="33" rx="7" fill="#53bdeb" />
          <path d="M6.500 34Q8 46 19 47Q30 46 31.500 34M19 47V57" stroke="#53bdeb" strokeWidth="3.400" strokeLinecap="round" />
        </svg>
      </div>
    </div>
  );
}

const longMessage = [
  "Si no me va entregar el carro creo",
  "que lo mejor será que me devuelva el",
  "dinero no e comido nada desde hace",
  "una semana y lo único que tenía se lo",
  "envíe con la esperanza de que me ayude",
  "porque necesito trabajar y se la a pasado",
  "ignorandome y dándole vueltas a eso no",
  "me a enviado papeles nunca me hizo la",
  "videollamada es mejor que me devuelva",
  "mis 35 dólares",
];

function Chat() {
  return (
    <div className="relative h-[1828px] overflow-hidden pr-[47px]">
      <div className="-mt-[75px] flex flex-col">
        <Deleted time="1:27 p. m." />
        <Deleted time="1:27 p. m." className="mt-[7px]" />
        <Deleted time="1:27 p. m." className="mt-[7px]" />
        <Deleted time="1:28 p. m." className="mt-[7px]" />
        <Deleted time="1:28 p. m." className="mt-[7px]" />
        <div className="mt-[7px] flex flex-col gap-[6px]">
          <Bubble text="Holaaa" time="1:30 p. m." width="w-[414px]" />
          <Bubble text="Hola" time="2:09 p. m." width="w-[366px]" />
          <Bubble text="Me dejó en el aire" time="2:16 p. m." width="w-[618px]" />
        </div>
        <VoiceNote />
        <div className="mt-[29px] flex flex-col gap-[6px]">
          <div className="relative self-end">
            <Bubble text="?" time="3:54 p. m." width="w-[296px] rounded-tr-none" />
            <svg className="absolute -right-[19px] top-0 h-[34px] w-[24px]" viewBox="0 0 24 34" fill="#144d37">
              <path d="M20 0H0V34H5V30L23 7Q25 0 20 0Z" />
            </svg>
          </div>
          <Bubble text="Buenas" time="4:01 p. m." width="w-[420px]" />
          <Bubble text="Buenas tardes" time="4:01 p. m." width="w-[555px]" />
          <div className="relative h-[557px] w-[876px] self-end rounded-[33px] bg-[#144d37] pl-[27px] pt-[16px]">
            {longMessage.map((line) => (
              <div key={line} className="whitespace-nowrap text-[44px] leading-[52px] text-[#f7f8fa]">{line}</div>
            ))}
            <span className="absolute bottom-[10px] right-[23px] flex items-end"><Time>4:05 p. m.</Time><Ticks /></span>
          </div>
          <div className="h-[90px] w-[876px] self-end rounded-[33px] bg-[#144d37]" />
        </div>
      </div>
      <div className="absolute right-[33px] top-[1695px] flex h-[89px] w-[89px] items-center justify-center rounded-full bg-[#27323a] shadow-[0_2px_6px_rgba(0,0,0,0.4)]">
        <svg className="mt-[8px] h-[35px] w-[32px]" viewBox="0 0 32 35" fill="none" stroke="#90989c" strokeWidth="4.600">
          <path d="M3 3L16 15.500L29 3M3 19.500L16 32L29 19.500" strokeLinecap="round" />
        </svg>
      </div>
    </div>
  );
}

/* ---------- composer and navigation ---------- */

function Composer() {
  return (
    <div className="relative flex h-[153px] items-start pl-[14px] pt-[6px]">
      <div className="mt-[5px] flex h-[129px] w-[906px] items-center rounded-[64px] bg-[#1f272a] pl-[35px]">
        <svg className="h-[56px] w-[56px] shrink-0" viewBox="0 0 56 56" fill="none" stroke="#8c9498" strokeWidth="5" strokeLinejoin="round">
          <path d="M53 30V17Q53 3 39 3H17Q3 3 3 17V39Q3 53 17 53H28Q50 47 53 30Z" />
          <circle cx="18.500" cy="19" r="4.800" fill="#8c9498" stroke="none" />
          <circle cx="37.500" cy="19" r="4.800" fill="#8c9498" stroke="none" />
          <path d="M15 30.500H35Q31 34 30 42Q17 41 15 30.500Z" fill="#8c9498" stroke="none" />
          <path d="M31 53V44Q32 32 44 32H53" />
        </svg>
        <span className="ml-[37px] w-[564px] text-[50.6px] leading-[58px] text-[#8c9498]">Mensaje</span>
        <svg className="h-[56px] w-[35px] shrink-0" viewBox="0 0 35 56" fill="none" stroke="#8c9498" strokeWidth="4.800" strokeLinecap="round">
          <path d="M32.500 13V39.500Q32 53.500 17.500 53.500Q2.500 53.500 2.500 39.500V13Q2.500 2.500 12.400 2.500Q22.300 2.500 22.300 13V38Q22 43 17.400 43Q12.600 43 12.600 38V13" />
        </svg>
        <svg className="ml-[87px] h-[50px] w-[56px] shrink-0" viewBox="0 0 56 50" fill="none" stroke="#8c9498" strokeWidth="5.200">
          <path d="M3 10.500Q3 8.500 5 8.500H15.500L20.500 3H35.500L40.500 8.500H51Q53 8.500 53 10.500V45Q53 47 51 47H5Q3 47 3 45Z" strokeLinejoin="round" />
          <circle cx="28" cy="28" r="10" />
        </svg>
      </div>
      <div className="ml-[13px] flex h-[132px] w-[132px] items-center justify-center rounded-full bg-[#21c063]">
        <svg className="mt-[-3px] h-[54px] w-[40px]" viewBox="0 0 40 54" fill="none">
          <rect x="11.500" y="0" width="17" height="34" rx="8.500" fill="#0b1014" />
          <path d="M3.500 27Q6 42 20 42Q34 42 36.500 27M20 43V50.500" stroke="#0b1014" strokeWidth="5" strokeLinecap="round" />
        </svg>
      </div>
    </div>
  );
}

function NavBar() {
  return (
    <div className="relative flex h-[130px] items-center bg-black pl-[276px]">
      <div className="h-[40px] w-[40px] rounded-[6px] bg-[#9b9b9b]" />
      <div className="ml-[196px] flex h-[55px] w-[55px] items-center justify-center rounded-full border-[5px] border-[#9b9b9b]">
        <div className="h-[31px] w-[31px] rounded-full bg-[#9b9b9b]" />
      </div>
      <svg className="ml-[197px] h-[46px] w-[37px]" viewBox="0 0 37 46" fill="#9b9b9b">
        <path d="M37 2V44Q36.500 46.500 34.500 45L1.500 25Q-.5 23 1.500 21L34.500 1Q36.500 -.5 37 2Z" />
      </svg>
    </div>
  );
}

export default function App() {
  return (
    <div className="relative h-[2340px] w-[1080px] overflow-hidden bg-[#0b1014] font-['Roboto',sans-serif]">
      <Wallpaper />
      <div className="relative bg-[#0b1014]">
        <StatusBar />
        <Header />
      </div>
      <Chat />
      <Composer />
      <NavBar />
    </div>
  );
}
